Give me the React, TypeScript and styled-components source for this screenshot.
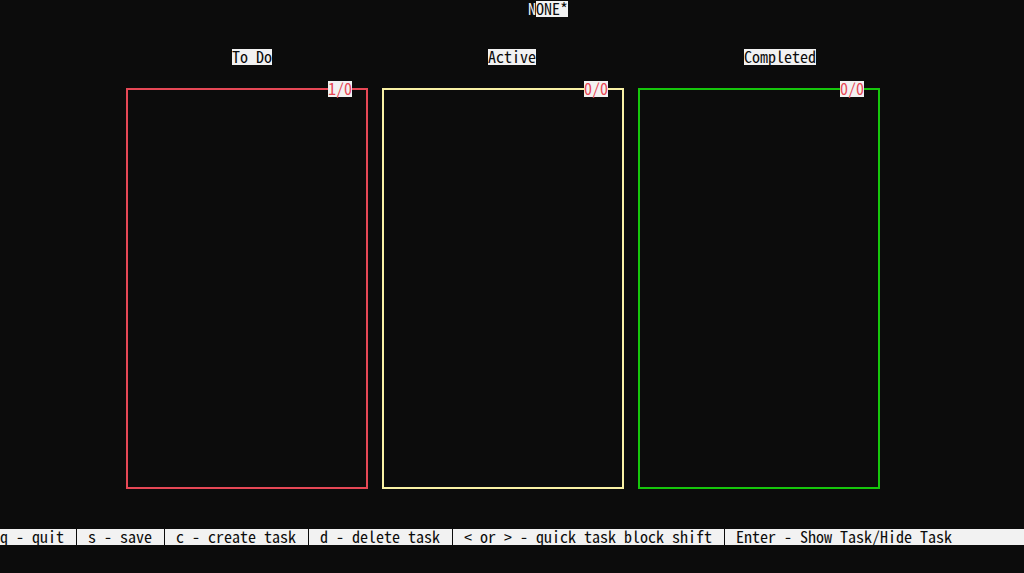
import React from "react";
import styled, { createGlobalStyle } from "styled-components";

const Global = createGlobalStyle`
  html, body { margin: 0; padding: 0; background: #0c0c0c; }
  body { font-family: "Noto Sans Mono CJK JP", "Liberation Mono", monospace; font-size: 16px; line-height: 14px; }
`;

const Screen = styled.div`
  width: 1024px;
  height: 573px;
  background: #0c0c0c;
  color: #f2f2f2;
  display: flex;
  flex-direction: column;
  padding-top: 1px;
  box-sizing: border-box;
  overflow: hidden;
`;

const TitleRow = styled.div`
  height: 16px;
  padding-left: 528px;
  display: flex;
  white-space: pre;
`;

const Cursor = styled.span`
  height: 16px;
  color: #f2f2f2;
`;

const Inverse = styled.span`
  height: 16px;
  background: #f2f2f2;
  color: #0c0c0c;
`;

const Board = styled.div`
  margin-top: 32px;
  padding-left: 126px;
  display: flex;
  gap: 14px;
`;

const Column = styled.div`
  width: 242px;
  display: flex;
  flex-direction: column;
`;

const Label = styled.div`
  height: 16px;
  padding-left: 106px;
  display: flex;
  white-space: pre;
`;

const LabelText = styled.span`
  height: 16px;
  background: #f2f2f2;
  color: #0c0c0c;
`;

const Box = styled.div<{ $color: string }>`
  position: relative;
  margin-top: 23px;
  height: 401px;
  box-sizing: border-box;
  border: 2px solid ${(p) => p.$color};
`;

const Counter = styled.span`
  position: absolute;
  top: -9px;
  right: 14px;
  width: 24px;
  height: 16px;
  background: #f2f2f2;
  color: #e74856;
  white-space: pre;
`;

const Footer = styled.div`
  margin-top: 40px;
  height: 16px;
  background: #f2f2f2;
  color: #0c0c0c;
  display: flex;
  white-space: pre;
`;

const KeyHint = styled.span`
  height: 16px;
`;

const Sep = styled.span`
  width: 8px;
  height: 16px;
  display: inline-flex;
  justify-content: center;
  &::before {
    content: "";
    width: 1px;
    height: 16px;
    background: #0c0c0c;
  }
`;

const columns = [
  { title: "To Do", color: "#e74856", count: "1/0" },
  { title: "Active", color: "#f9f1a5", count: "0/0" },
  { title: "Completed", color: "#16c60c", count: "0/0" },
];

const keys = [
  "q - quit ",
  " s - save ",
  " c - create task ",
  " d - delete task ",
  " < or > - quick task block shift ",
  " Enter - Show Task/Hide Task",
];

export default function App() {
  return (
    <>
      <Global />
      <Screen>
        <TitleRow>
          <Cursor>N</Cursor>
          <Inverse>ONE*</Inverse>
        </TitleRow>
        <Board>
          {columns.map((c) => (
            <Column key={c.title}>
              <Label>
                <LabelText>{c.title}</LabelText>
              </Label>
              <Box $color={c.color}>
                <Counter>{c.count}</Counter>
              </Box>
            </Column>
          ))}
        </Board>
        <Footer>
          {keys.map((k, i) => (
            <React.Fragment key={k}>
              {i > 0 && <Sep />}
              <KeyHint>{k}</KeyHint>
            </React.Fragment>
          ))}
        </Footer>
      </Screen>
    </>
  );
}
